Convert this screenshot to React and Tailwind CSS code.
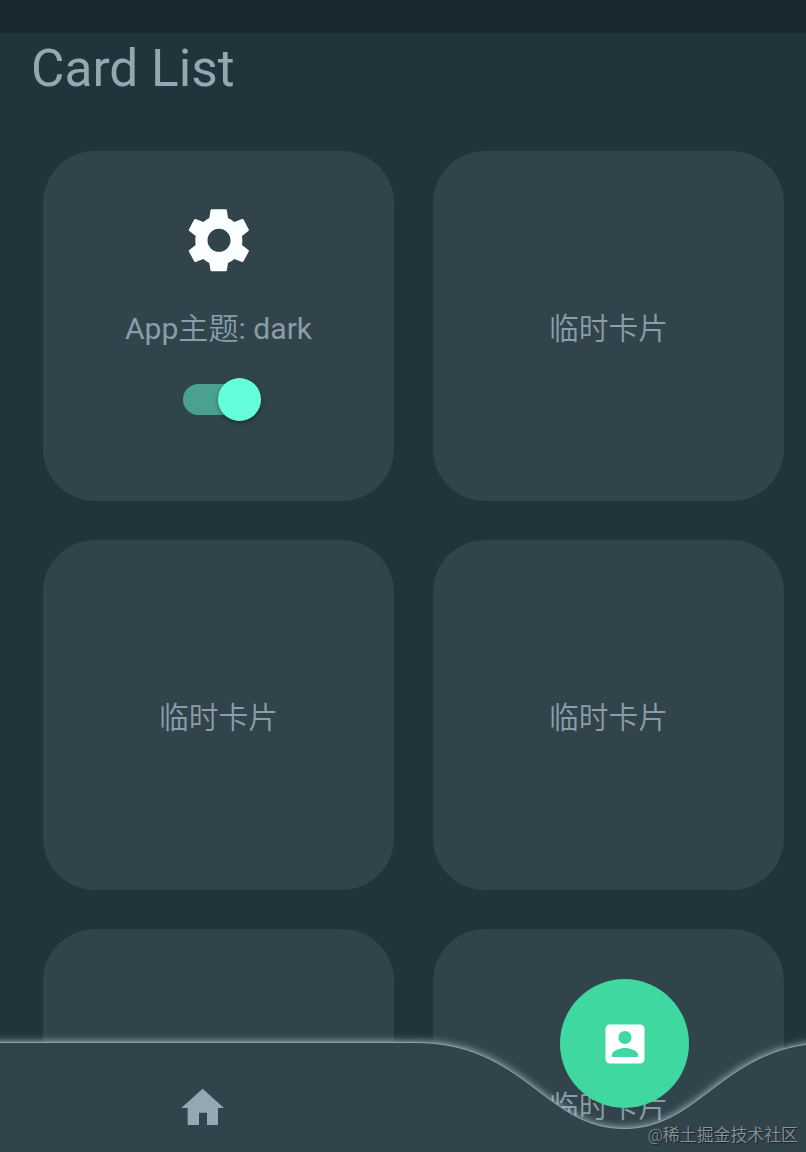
const FONT = "font-['Roboto','Noto_Sans_CJK_SC',sans-serif]";

function SettingsIcon() {
  return (
    <svg viewBox="18 9 225 225" className="size-[75px] fill-[#fbffff]">
      <path
        fillRule="evenodd"
        d="M110 28H152Q155 28 155.500 31L159 54Q169 58 178 66L201 57Q204 56 206 59L221 88Q223 91 220 93L201 108Q203 121 201 135L220 150Q223 152 221 155L206 183Q204 187 201 186L178 177Q169 185 159 189L155.500 211Q155 214 152 214H110Q107 214 106.500 211L103 189Q94 185 85 177L62 186Q59 187 57 183L42 155Q40 152 43 150L62 135Q60 121 62 108L43 93Q40 91 42 88L57 59Q59 56 62 57L85 66Q94 58 103 54L106.500 31Q107 28 110 28ZM132 86.500A34.500 34.500 0 1 0 132 155.500A34.500 34.500 0 1 0 132 86.500Z"
      />
    </svg>
  );
}

function HomeIcon() {
  return (
    <svg viewBox="21 3 153 153" className="size-[51px] fill-[#94a8b3]">
      <path d="M98 26L162 84H144V135H111V98H87V135H53V84H34Z" />
    </svg>
  );
}

function AccountIcon() {
  return (
    <svg viewBox="0 0 24 24" className="size-[52px] fill-white">
      <path d="M3 5v14c0 1.100.89 2 2 2h14c1.100 0 2-.9 2-2V5c0-1.100-.9-2-2-2H5c-1.110 0-2 .9-2 2zm12 4c0 1.660-1.340 3-3 3s-3-1.340-3-3 1.340-3 3-3 3 1.340 3 3zm-9 8c0-2 4-3.100 6-3.100s6 1.100 6 3.100v1H6v-1z" />
    </svg>
  );
}

function Switch() {
  return (
    <div role="switch" aria-checked="true" className="flex h-[43px] w-[78px] items-center justify-end rounded-full">
      <div className="h-[31px] w-[73px] shrink-0 rounded-full bg-[#4aa191]" />
      <div className="-ml-[38px] size-[43px] shrink-0 rounded-full bg-[#64ffda] shadow-[0_2px_4px_rgba(0,0,0,0.35)]" />
    </div>
  );
}

function Card({ children }) {
  return (
    <div className="flex h-[350px] flex-col items-center justify-center rounded-[52px] bg-[#31434b] pt-[5px] text-[29.8px] leading-[36px] font-[350] text-[#8a9da8]">
      {children}
    </div>
  );
}

function ThemeCard() {
  return (
    <div className="flex h-[350px] flex-col items-center rounded-[52px] bg-[#31434b] pt-[52px] text-[#8a9da8]">
      <SettingsIcon />
      <div className="mt-[33px] text-[30.1px] leading-[36px] font-[350] whitespace-nowrap">
        <span className="font-normal">App</span>主题<span className="font-normal">: dark</span>
      </div>
      <div className="mt-[31px] ml-[7px]">
        <Switch />
      </div>
    </div>
  );
}

function BottomNav() {
  return (
    <nav className="absolute inset-x-0 bottom-0 h-[192px]">
      <svg viewBox="0 0 806 192" className="absolute inset-0 h-full w-full">
        <defs>
          <filter id="glow" filterUnits="userSpaceOnUse" x="-30" y="40" width="880" height="190">
            <feGaussianBlur stdDeviation="4.2" />
          </filter>
        </defs>
        <path
          d="M-20 82.5H415C525 82.5 545 168.5 624 168.5S723 82.5 833 82.5V230H-20Z"
          fill="#b9cad3"
          filter="url(#glow)"
        />
        <path
          d="M-20 82.5H415C525 82.5 545 168.5 624 168.5S723 82.5 833 82.5V230H-20Z"
          fill="#31434b"
          stroke="#8da0a9"
          strokeWidth="1"
        />
      </svg>
      <div className="absolute top-[121px] left-[177px]">
        <HomeIcon />
      </div>
      <button className="absolute top-[19px] left-[560px] flex size-[129px] items-center justify-center rounded-full bg-[#3fd8a0]">
        <AccountIcon />
      </button>
      <span className="absolute right-[8px] bottom-[5px] text-[16.9px] leading-[24px] font-[350] whitespace-nowrap text-[#87949b] [text-shadow:1px_1px_1px_rgba(0,0,0,0.5)]">
        @稀土掘金技术社区
      </span>
    </nav>
  );
}

export default function App() {
  return (
    <div className={`relative flex h-[1152px] w-[806px] flex-col overflow-hidden bg-[#21343c] ${FONT}`}>
      <div className="h-[33px] shrink-0 bg-[#19272f]" />
      <h1 className="h-[118px] shrink-0 pt-[5px] pl-[31px] text-[51.4px] leading-[62px] font-normal text-[#94a8b1]">
        Card List
      </h1>
      <main className="grid shrink-0 grid-cols-2 gap-[39px] pr-[22px] pl-[43px]">
        <ThemeCard />
        <Card>临时卡片</Card>
        <Card>临时卡片</Card>
        <Card>临时卡片</Card>
        <Card>临时卡片</Card>
        <Card>临时卡片</Card>
      </main>
      <BottomNav />
    </div>
  );
}
